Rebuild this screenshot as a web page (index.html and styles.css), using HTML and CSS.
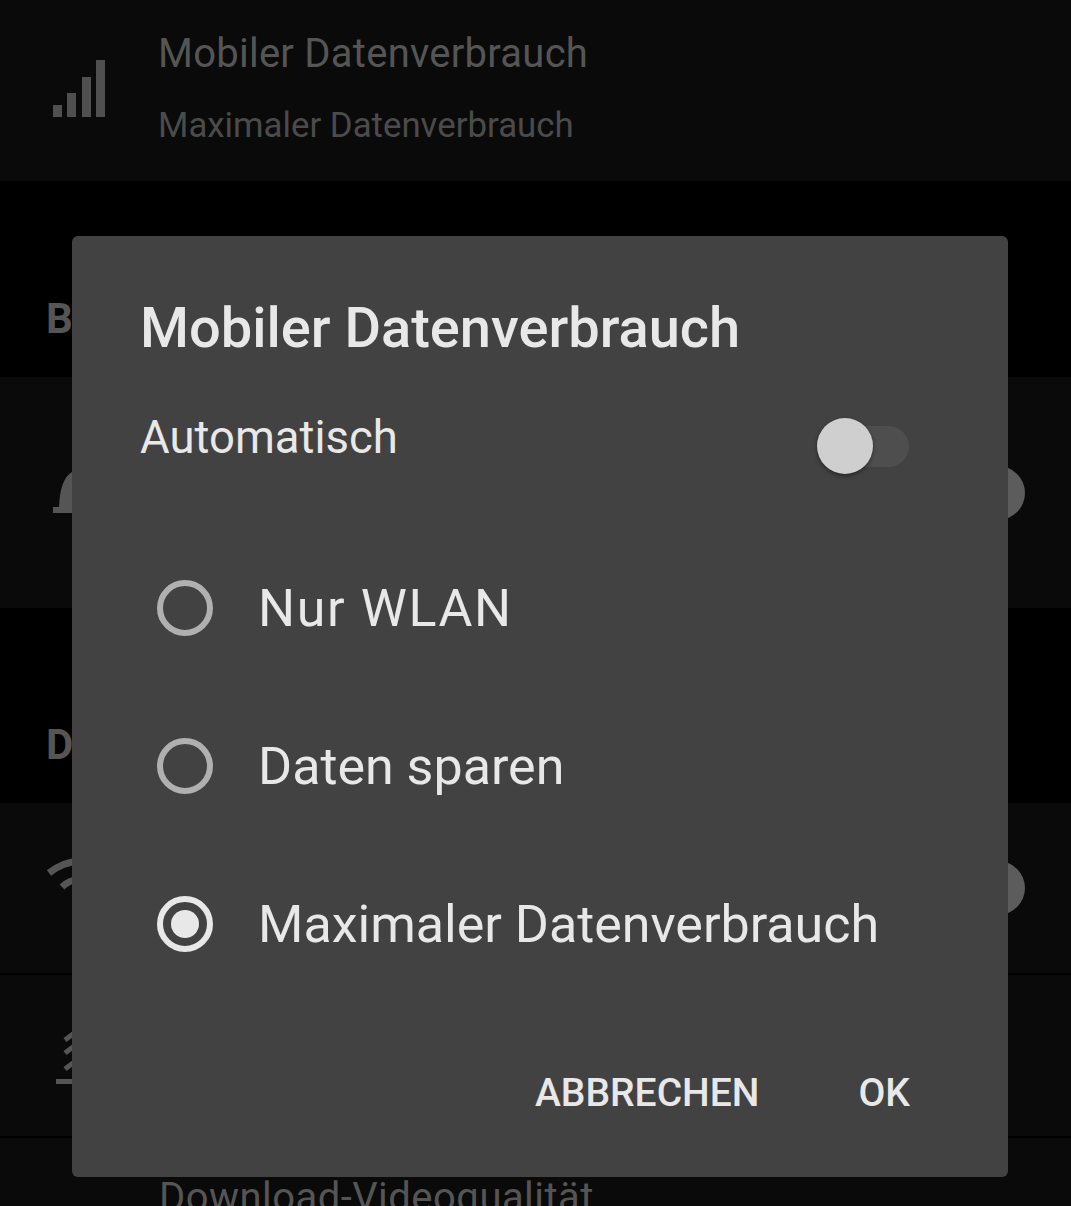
FILE: index.html
```html
<!DOCTYPE html>
<html>
<head>
  <title>Mobiler Datenverbrauch</title>
  <link rel="stylesheet" href="styles.css">
</head>
<body>
  <div class="settings">
    <div class="row row-data">
      <svg class="row-icon" width="60" height="60" viewBox="0 0 60 60">
        <rect x="3" y="48" width="9" height="12" fill="#4f4f4f"/>
        <rect x="17" y="36" width="9" height="24" fill="#4f4f4f"/>
        <rect x="32" y="20" width="9" height="40" fill="#4f4f4f"/>
        <rect x="46" y="3" width="9" height="57" fill="#4f4f4f"/>
      </svg>
      <div class="row-text">
        <div class="row-title">Mobiler Datenverbrauch</div>
        <div class="row-sub">Maximaler Datenverbrauch</div>
      </div>
    </div>

    <h2 class="section section-first">B</h2>
    <div class="row row-notify">
      <svg class="row-icon" width="60" height="60" viewBox="0 0 60 60">
        <path d="M3 46 L3 40 L9 40 Q10 12 22 5 L40 3 L40 46 Z" fill="#555"/>
      </svg>
      <div class="knob"></div>
    </div>

    <h2 class="section">D</h2>
    <div class="row row-wifi">
      <svg class="row-icon" width="60" height="60" viewBox="0 0 60 60">
        <path d="M-1 15 Q28 -8 60 15" fill="none" stroke="#555" stroke-width="7"/>
        <path d="M12 29 Q28 14 48 29" fill="none" stroke="#555" stroke-width="7"/>
      </svg>
      <div class="knob"></div>
    </div>
    <div class="row row-smart">
      <svg class="row-icon" width="60" height="60" viewBox="0 0 60 60">
        <path d="M12 9 L24 0 M12 22 L24 13 M12 38 L24 29" fill="none" stroke="#555" stroke-width="5"/>
        <rect x="3" y="48" width="30" height="5" fill="#555"/>
      </svg>
    </div>
    <div class="row row-quality">
      <div class="row-text">
        <div class="row-title row-title-wide">Download-Videoqualität</div>
      </div>
    </div>
  </div>

  <div class="dialog">
    <h1 class="dialog-title">Mobiler Datenverbrauch</h1>
    <div class="auto-row">
      <span class="auto-label">Automatisch</span>
      <div class="switch">
        <div class="switch-track"></div>
        <div class="switch-thumb"></div>
      </div>
    </div>
    <ul class="options">
      <li class="option option-wide"><span class="radio"></span>Nur WLAN</li>
      <li class="option"><span class="radio"></span>Daten sparen</li>
      <li class="option"><span class="radio radio-on"></span>Maximaler Datenverbrauch</li>
    </ul>
    <div class="actions">
      <button class="action">ABBRECHEN</button>
      <button class="action">OK</button>
    </div>
  </div>
</body>
</html>
```

FILE: styles.css
```css
html,
body {
  margin: 0;
  height: 1206px;
  overflow: hidden;
  background-color: #000000;
  font-family: Roboto, "Liberation Sans", sans-serif;
}

.settings {
  display: flex;
  flex-direction: column;
}

.row {
  display: flex;
  align-items: center;
  background-color: #0a0a0a;
  padding: 0 46px 0 50px;
}

.row-icon {
  flex: none;
  overflow: visible;
}

.row-text {
  margin-left: 48px;
}

.row-title {
  color: #555555;
  font-size: 40px;
  line-height: 50px;
  letter-spacing: 0.25px;
}

.row-title-wide {
  letter-spacing: 0.45px;
}

.row-sub {
  color: #4b4b4b;
  font-size: 34.8px;
  line-height: 44px;
  margin-top: 24px;
}

.row-data {
  height: 181px;
  align-items: flex-start;
}

.row-data .row-text {
  padding-top: 29px;
}

.row-data .row-icon {
  margin-top: 57px;
}

.row-notify {
  height: 231px;
}

.row-notify .row-icon {
  margin-top: 8px;
}

.row-wifi {
  height: 170px;
  margin-bottom: 2px;
}

.row-smart {
  height: 161px;
  margin-bottom: 2px;
}

.row-smart .row-icon {
  margin-top: 10px;
  margin-left: 3px;
}

.row-quality {
  height: 68px;
  align-items: flex-start;
  padding-top: 35px;
  box-sizing: border-box;
}

.row-quality .row-text {
  margin-left: 109px;
}

.knob {
  width: 54px;
  height: 54px;
  border-radius: 50%;
  background-color: #5c5c5c;
  margin-left: auto;
}

.section {
  margin: 0;
  height: 195px;
  box-sizing: border-box;
  padding: 112px 0 0 46px;
  color: #555555;
  font-size: 42px;
  line-height: 50px;
  font-weight: 700;
}

.section-first {
  height: 196px;
  padding-top: 113px;
}

.dialog {
  position: absolute;
  left: 72px;
  top: 236px;
  width: 936px;
  height: 941px;
  box-sizing: border-box;
  padding: 60px 98px 60px 68px;
  background-color: #424242;
  border-radius: 6px;
  color: #e8e8e8;
}

.dialog-title {
  margin: 0;
  font-size: 56px;
  line-height: 64px;
  font-weight: 500;
}

.auto-row {
  display: flex;
  justify-content: space-between;
  margin-top: 52px;
  height: 64px;
}

.auto-label {
  font-size: 45.5px;
  line-height: 52px;
}

.switch {
  position: relative;
  width: 92px;
  height: 56px;
  margin-top: 6px;
  margin-right: 1px;
}

.switch-track {
  position: absolute;
  left: 16px;
  right: 0;
  top: 8px;
  height: 41px;
  border-radius: 21px;
  background-color: #4e4e4e;
}

.switch-thumb {
  position: absolute;
  left: 0;
  top: 0;
  width: 56px;
  height: 56px;
  border-radius: 50%;
  background-color: #cfcfcf;
  box-shadow: 0 2px 4px rgba(0, 0, 0, 0.4);
}

.options {
  list-style-type: none;
  margin: 53px 0 0;
  padding: 0;
}

.option {
  display: flex;
  align-items: center;
  height: 158px;
  font-size: 52px;
  padding-left: 17px;
}

.option-wide {
  letter-spacing: 1.6px;
}

.radio {
  flex: none;
  box-sizing: border-box;
  width: 56px;
  height: 56px;
  margin-right: 45px;
  border: 6px solid #b0b0b0;
  border-radius: 50%;
  display: flex;
  align-items: center;
  justify-content: center;
}

.radio-on {
  border-color: #e8e8e8;
}

.radio-on::after {
  content: "";
  width: 28px;
  height: 28px;
  border-radius: 50%;
  background-color: #e8e8e8;
}

.actions {
  display: flex;
  justify-content: flex-end;
  gap: 99px;
  margin-top: 65px;
}

.action {
  padding: 0;
  border: none;
  background: none;
  color: #e8e8e8;
  font-family: inherit;
  font-size: 39px;
  line-height: 50px;
  font-weight: 500;
  cursor: pointer;
}
```
